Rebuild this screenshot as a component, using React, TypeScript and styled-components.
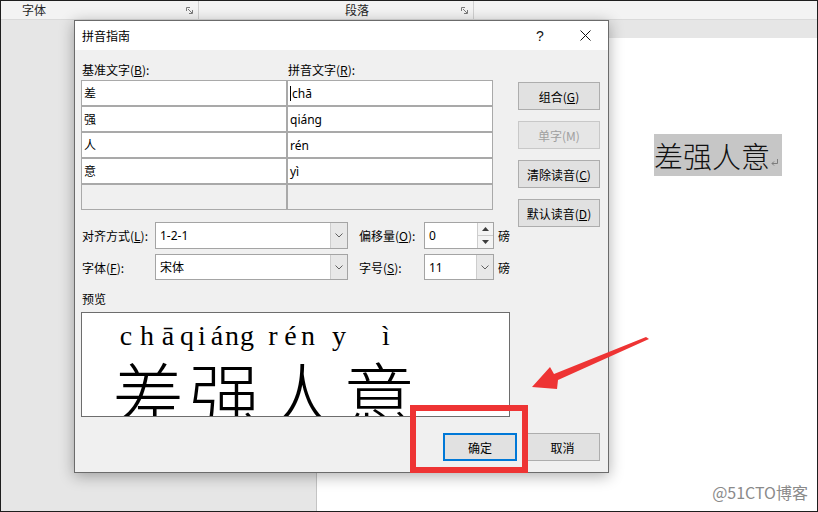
import React from "react";
import styled, { createGlobalStyle } from "styled-components";

const Global = createGlobalStyle`
  html, body { margin: 0; padding: 0; background: #fff; }
  body { font-family: "Noto Sans CJK SC", "Noto Sans", sans-serif; font-size: 12px; color: #000; }
  * { box-sizing: border-box; }
`;

const Screen = styled.div`
  position: relative;
  width: 818px;
  height: 512px;
  border: 1px solid #1e1e1e;
  display: flex;
  flex-direction: column;
  overflow: hidden;
  background: #e6e6e6;
`;

const Ribbon = styled.div`
  height: 19px;
  flex: none;
  display: flex;
  background: #f3f3f3;
  border-bottom: 1px solid #dadada;
`;

const RibbonGroup = styled.div<{ $w: number; $pl: number }>`
  width: ${(p) => p.$w}px;
  padding-left: ${(p) => p.$pl}px;
  padding-right: 5px;
  border-right: 1px solid #d0d0d0;
  display: flex;
  align-items: center;
  justify-content: space-between;
  color: #262626;
  font-size: 12px;
  line-height: 18px;
`;

const Launcher = () => (
  <svg width="7" height="7" viewBox="0 0 7 7" fill="none" stroke="#7a7a7a" strokeWidth="1">
    <path d="M0.5 4V0.5H4" />
    <path d="M2 2L6 6M6.5 3V6.5H3" />
  </svg>
);

const Workspace = styled.div`
  flex: 1;
  display: flex;
  padding: 18px 0 0 315px;
`;

const Page = styled.div`
  flex: 1;
  background: #fff;
  border-left: 1px solid #c4c4c4;
  padding: 96px 0 0 337px;
`;

const Selected = styled.div`
  display: inline-flex;
  align-items: center;
  height: 42px;
  padding-right: 3px;
  background: #c6c6c6;
  font-family: "Noto Sans CJK SC", sans-serif;
  font-weight: 300;
  font-size: 29px;
  color: #111;
`;

const ParaMark = () => (
  <svg width="9" height="9" viewBox="0 0 9 9" fill="none" stroke="#7d7d7d" strokeWidth="1" style={{ marginTop: 14 }}>
    <path d="M7.5 1V5.5H2" />
    <path d="M4 3.5L2 5.5L4 7.5" />
  </svg>
);

const Dialog = styled.div`
  position: absolute;
  left: 73px;
  top: 19px;
  width: 535px;
  height: 453px;
  border: 1px solid #6b6b6b;
  background: #f0f0f0;
  box-shadow: 0 3px 14px rgba(0, 0, 0, 0.32);
  display: flex;
  flex-direction: column;
`;

const TitleBar = styled.div`
  height: 29px;
  flex: none;
  background: #fff;
  display: flex;
  align-items: center;
  padding-left: 7px;
`;

const Title = styled.div`
  flex: 1;
  font-size: 12px;
`;

const TitleBtn = styled.div<{ $w: number }>`
  width: ${(p) => p.$w}px;
  height: 29px;
  display: flex;
  align-items: center;
  justify-content: center;
  font-family: "Liberation Sans", sans-serif;
  font-size: 14px;
  color: #111;
`;

const Body = styled.div`
  flex: 1;
  display: flex;
  flex-direction: column;
  padding: 0 8px 0 6px;
`;

const TopSection = styled.div`
  display: flex;
  justify-content: space-between;
`;

const LeftCol = styled.div`
  width: 412px;
  display: flex;
  flex-direction: column;
`;

const HeaderRow = styled.div`
  margin-top: 9px;
  height: 21px;
  display: grid;
  grid-template-columns: 206px 206px;
  align-items: center;
`;

const FieldLabel = styled.div<{ $w?: number; $ml?: number }>`
  ${(p) => (p.$w ? `width: ${p.$w}px; flex: none;` : "")}
  margin-left: ${(p) => p.$ml ?? 0}px;
  padding-left: 1px;
  font-size: 12px;
  white-space: nowrap;
  color: #000;
`;

const Key = styled.span`
  text-decoration: underline;
  text-underline-offset: 1px;
`;

const Table = styled.div`
  display: grid;
  grid-template-columns: 204px 204px;
  grid-auto-rows: 24px;
  gap: 2px;
  padding: 1px;
  background: #a9a9a9;
`;

const Cell = styled.div<{ $empty?: boolean }>`
  background: ${(p) => (p.$empty ? "#f0f0f0" : "#fff")};
  padding-left: 2px;
  display: flex;
  align-items: center;
  font-size: 12px;
  font-family: "Noto Sans", "Noto Sans CJK SC", sans-serif;
`;

const Caret = styled.span`
  display: inline-block;
  width: 1px;
  height: 15px;
  background: #000;
  margin-right: 1px;
`;

const FormRow = styled.div<{ $mt: number; $h: number }>`
  margin-top: ${(p) => p.$mt}px;
  height: ${(p) => p.$h}px;
  display: flex;
  align-items: center;
`;

const Combo = styled.div<{ $w: number }>`
  width: ${(p) => p.$w}px;
  height: 100%;
  flex: none;
  display: flex;
  background: #fff;
  border: 1px solid #a4a4a4;
`;

const ComboText = styled.div`
  flex: 1;
  display: flex;
  align-items: center;
  padding-left: 4px;
  font-size: 12px;
  font-family: "Noto Sans", "Noto Sans CJK SC", sans-serif;
`;

const DropBtn = styled.div`
  width: 17px;
  flex: none;
  background: #e8e8e8;
  border-left: 1px solid #cdcdcd;
  display: flex;
  align-items: center;
  justify-content: center;
`;

const Chevron = () => (
  <svg width="8" height="5" viewBox="0 0 8 5" fill="none" stroke="#606060" strokeWidth="1">
    <path d="M0.5 0.5L4 4L7.5 0.5" />
  </svg>
);

const SpinBtns = styled.div`
  width: 16px;
  flex: none;
  display: flex;
  flex-direction: column;
  border-left: 1px solid #cdcdcd;
`;

const SpinHalf = styled.div<{ $top?: boolean }>`
  flex: 1;
  display: flex;
  align-items: center;
  justify-content: center;
  background: #f4f4f4;
  ${(p) => (p.$top ? "border-bottom: 1px solid #cdcdcd;" : "")}
`;

const Tri = ({ up }: { up?: boolean }) => (
  <svg width="7" height="4" viewBox="0 0 7 4">
    <path d={up ? "M0 4L3.5 0L7 4Z" : "M0 0L3.5 4L7 0Z"} fill="#3c3c3c" />
  </svg>
);

const Unit = styled.div`
  margin-left: 4px;
  font-size: 12px;
`;

const ButtonCol = styled.div`
  width: 82px;
  padding-top: 32px;
  display: flex;
  flex-direction: column;
  gap: 11px;
`;

const Button = styled.div<{ $disabled?: boolean; $primary?: boolean; $w?: number }>`
  height: 28px;
  ${(p) => (p.$w ? `width: ${p.$w}px;` : "")}
  display: flex;
  align-items: center;
  justify-content: center;
  font-size: 12px;
  background: ${(p) => (p.$disabled ? "#e6e6e6" : "#e1e1e1")};
  color: ${(p) => (p.$disabled ? "#a0a0a0" : "#000")};
  border: ${(p) => (p.$primary ? "2px solid #0078d7" : p.$disabled ? "1px solid #c8c8c8" : "1px solid #adadad")};
`;

const PreviewLabel = styled.div`
  margin-top: 9px;
  height: 18px;
  display: flex;
  align-items: center;
  padding-left: 1px;
  font-size: 12px;
`;

const Preview = styled.div`
  margin-top: 5px;
  width: 429px;
  height: 105px;
  flex: none;
  border: 1px solid #6d6d6d;
  background: #fff;
  overflow: hidden;
`;

const RubyRow = styled.div`
  display: flex;
  height: 44px;
  padding-top: 3px;
  font-family: "Liberation Serif", serif;
  font-size: 28px;
  line-height: 40px;
  color: #000;
`;

const RubyGroup = styled.div<{ $ml: number; $gap: number }>`
  display: flex;
  margin-left: ${(p) => p.$ml}px;
  gap: ${(p) => p.$gap}px;
`;

const RubyLetter = styled.span`
  width: 14px;
  display: flex;
  justify-content: center;
`;

const BaseRow = styled.div`
  padding-left: 30px;
  margin-top: -1px;
  font-family: "Noto Sans CJK SC", sans-serif;
  font-weight: 300;
  font-size: 72px;
  line-height: 72px;
  letter-spacing: 5px;
  white-space: nowrap;
  color: #000;
`;

const Footer = styled.div`
  margin-top: 16px;
  display: flex;
  justify-content: flex-end;
  gap: 8px;
`;

const Highlight = styled.div`
  position: absolute;
  left: 409px;
  top: 404px;
  width: 118px;
  height: 68px;
  border: 6px solid #ee3434;
`;

const ArrowSvg = styled.svg`
  position: absolute;
  left: 524px;
  top: 329px;
`;

const Watermark = styled.div`
  position: absolute;
  right: 9px;
  bottom: 7px;
  font-family: "Noto Sans CJK SC", sans-serif;
  font-size: 16px;
  color: #8a8a8a;
  text-shadow: 0 0 2px #fff;
`;

const rubyGroups = [
  { letters: ["c", "h", "ā"], ml: 37, gap: 7 },
  { letters: ["q", "i", "á", "n", "g"], ml: 5, gap: 1 },
  { letters: ["r", "é", "n"], ml: 12, gap: 3.5 },
  { letters: ["y", "ì"], ml: 17, gap: 33 },
];

const rows = [
  ["差", "chā"],
  ["强", "qiáng"],
  ["人", "rén"],
  ["意", "yì"],
];

export default function App() {
  return (
    <>
      <Global />
      <Screen>
        <Ribbon>
          <RibbonGroup $w={198} $pl={21}>
            <span>字体</span>
            <Launcher />
          </RibbonGroup>
          <RibbonGroup $w={275} $pl={146}>
            <span>段落</span>
            <Launcher />
          </RibbonGroup>
        </Ribbon>
        <Workspace>
          <Page>
            <Selected>
              差强人意
              <ParaMark />
            </Selected>
          </Page>
        </Workspace>

        <Dialog>
          <TitleBar>
            <Title>拼音指南</Title>
            <TitleBtn $w={44}>?</TitleBtn>
            <TitleBtn $w={46}>
              <svg width="11" height="11" viewBox="0 0 11 11" stroke="#111" strokeWidth="1">
                <path d="M0.5 0.5L10.5 10.5M10.5 0.5L0.5 10.5" />
              </svg>
            </TitleBtn>
          </TitleBar>
          <Body>
            <TopSection>
              <LeftCol>
                <HeaderRow>
                  <FieldLabel>
                    基准文字(<Key>B</Key>):
                  </FieldLabel>
                  <FieldLabel>
                    拼音文字(<Key>R</Key>):
                  </FieldLabel>
                </HeaderRow>
                <Table>
                  {rows.map(([han, py], i) => (
                    <React.Fragment key={han}>
                      <Cell>{han}</Cell>
                      <Cell>
                        {i === 0 && <Caret />}
                        {py}
                      </Cell>
                    </React.Fragment>
                  ))}
                  <Cell $empty />
                  <Cell $empty />
                </Table>
                <FormRow $mt={12} $h={27}>
                  <FieldLabel $w={74}>
                    对齐方式(<Key>L</Key>):
                  </FieldLabel>
                  <Combo $w={193}>
                    <ComboText>1-2-1</ComboText>
                    <DropBtn>
                      <Chevron />
                    </DropBtn>
                  </Combo>
                  <FieldLabel $w={66} $ml={10}>
                    偏移量(<Key>O</Key>):
                  </FieldLabel>
                  <Combo $w={70}>
                    <ComboText>0</ComboText>
                    <SpinBtns>
                      <SpinHalf $top>
                        <Tri up />
                      </SpinHalf>
                      <SpinHalf>
                        <Tri />
                      </SpinHalf>
                    </SpinBtns>
                  </Combo>
                  <Unit>磅</Unit>
                </FormRow>
                <FormRow $mt={5} $h={26}>
                  <FieldLabel $w={74}>
                    字体(<Key>F</Key>):
                  </FieldLabel>
                  <Combo $w={193}>
                    <ComboText>宋体</ComboText>
                    <DropBtn>
                      <Chevron />
                    </DropBtn>
                  </Combo>
                  <FieldLabel $w={66} $ml={10}>
                    字号(<Key>S</Key>):
                  </FieldLabel>
                  <Combo $w={70}>
                    <ComboText>11</ComboText>
                    <DropBtn>
                      <Chevron />
                    </DropBtn>
                  </Combo>
                  <Unit>磅</Unit>
                </FormRow>
              </LeftCol>
              <ButtonCol>
                <Button>
                  组合(<Key>G</Key>)
                </Button>
                <Button $disabled>单字(M)</Button>
                <Button>
                  清除读音(<Key>C</Key>)
                </Button>
                <Button>
                  默认读音(<Key>D</Key>)
                </Button>
              </ButtonCol>
            </TopSection>
            <PreviewLabel>预览</PreviewLabel>
            <Preview>
              <RubyRow>
                {rubyGroups.map((g, i) => (
                  <RubyGroup key={i} $ml={g.ml} $gap={g.gap}>
                    {g.letters.map((l, j) => (
                      <RubyLetter key={j}>{l}</RubyLetter>
                    ))}
                  </RubyGroup>
                ))}
              </RubyRow>
              <BaseRow>差强人意</BaseRow>
            </Preview>
            <Footer>
              <Button $primary $w={74}>
                确定
              </Button>
              <Button $w={75}>取消</Button>
            </Footer>
          </Body>
        </Dialog>

        <Highlight />
        <ArrowSvg width="130" height="66" viewBox="0 0 130 66">
          <polygon points="7,57 25,37 29,44 121,7 124,9 33,50 32,59" fill="#ee3434" />
        </ArrowSvg>
        <Watermark>@51CTO博客</Watermark>
      </Screen>
    </>
  );
}
